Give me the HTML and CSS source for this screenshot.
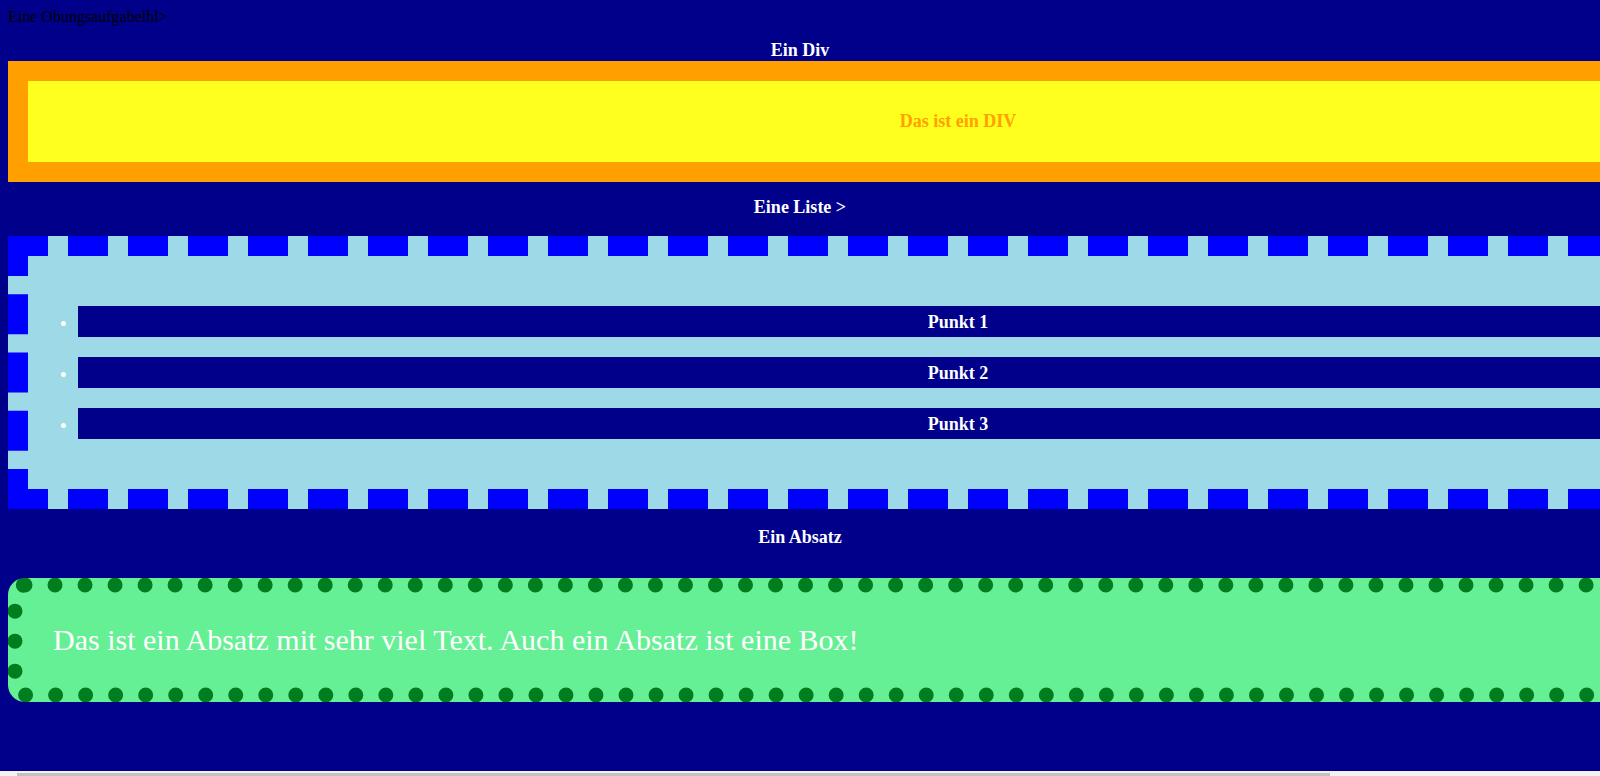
FILE: index.html
```html
<!DOCTYPE html>
<html lang="de">
<head>
<meta charset="utf-8">
<title>Eine Übungsaufgabe</title>
<link rel="stylesheet" href="styles.css">
</head>
<body>
<div class="intro">Eine Obungsaufgabelhl&gt;</div>
<p class="heading heading-div">Ein Div</p>
<div class="box-div">Das ist ein DIV</div>
<p class="heading heading-list">Eine Liste &gt;</p>
<ul class="box-list">
  <li>Punkt 1</li>
  <li>Punkt 2</li>
  <li>Punkt 3</li>
</ul>
<p class="heading heading-para">Ein Absatz</p>
<p class="box-para">Das ist ein Absatz mit sehr viel Text. Auch ein Absatz ist eine Box!</p>
<div class="scrollbar"><div class="scrollbar-thumb"></div></div>
</body>
</html>
```
FILE: styles.css
```css
html {
  background: #00008b;
}
body {
  margin: 0;
  padding: 8px;
  overflow: visible;
  font-family: "Liberation Serif", "Times New Roman", serif;
  font-size: 16px;
  color: #000;
}
.intro {
  line-height: 18px;
}
.heading {
  font-size: 18px;
  font-weight: bold;
  color: #fff;
  text-align: center;
  line-height: 21px;
}
.heading-div {
  margin: 14px 0 0;
}
.heading-list {
  margin: 15px 0 18px;
}
.heading-para {
  margin: 18px 0 30px;
}
.box-div {
  width: 1760px;
  padding: 30px 50px 31px;
  border: 20px solid #ffa000;
  background: #ffff1e;
  color: #ffa000;
  font-size: 18px;
  font-weight: bold;
  text-align: center;
  line-height: 20px;
}
.box-list {
  width: 1760px;
  margin: 0;
  padding: 50px;
  border: 20px dashed #0000ff;
  background: #9dd9e6;
  color: #fff;
}
.box-list li {
  padding-top: 1px;
  background: #00008b;
  color: #fff;
  font-size: 18px;
  font-weight: bold;
  text-align: center;
  line-height: 30px;
}
.box-list li + li {
  margin-top: 20px;
}
.box-para {
  width: 1760px;
  margin: 0;
  padding: 30px;
  border: 15px dotted #007d1f;
  border-radius: 17px;
  background: #66f095;
  color: #fff;
  font-size: 30px;
  line-height: 34px;
}
.scrollbar {
  position: fixed;
  left: 0;
  bottom: 0;
  width: 100%;
  height: 5px;
  background: #f1f1f1;
}
.scrollbar-thumb {
  margin: 2px 0 0 17px;
  width: 1313px;
  height: 3px;
  background: #c1c1c1;
}
```
